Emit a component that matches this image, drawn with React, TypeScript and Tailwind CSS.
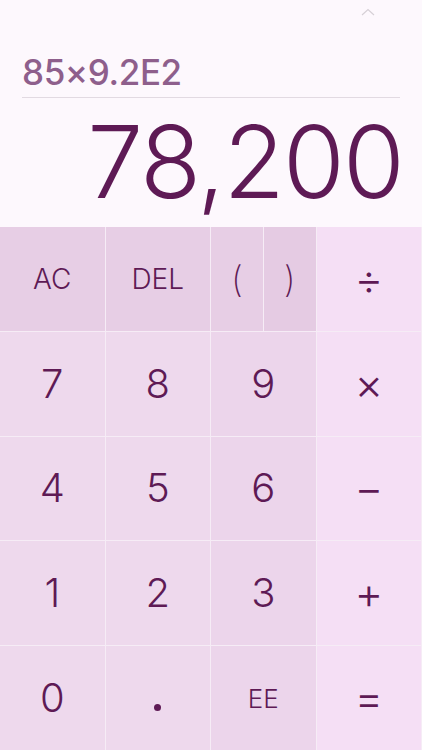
import React from 'react';

type Key = { label: string; tone: 'top' | 'num' | 'num3' | 'op'; size?: string };

const rows: Key[][] = [
  [
    { label: 'AC', tone: 'top', size: 'text-[28px]' },
    { label: 'DEL', tone: 'top', size: 'text-[28px]' },
    { label: '()', tone: 'top' },
    { label: '÷', tone: 'op', size: 'text-[44px]' },
  ],
  [
    { label: '7', tone: 'num' },
    { label: '8', tone: 'num' },
    { label: '9', tone: 'num3' },
    { label: '×', tone: 'op', size: 'text-[44px]' },
  ],
  [
    { label: '4', tone: 'num' },
    { label: '5', tone: 'num' },
    { label: '6', tone: 'num3' },
    { label: '−', tone: 'op', size: 'text-[44px]' },
  ],
  [
    { label: '1', tone: 'num' },
    { label: '2', tone: 'num' },
    { label: '3', tone: 'num3' },
    { label: '+', tone: 'op', size: 'text-[44px]' },
  ],
  [
    { label: '0', tone: 'num' },
    { label: '.', tone: 'num' },
    { label: 'EE', tone: 'num3', size: 'text-[26px]' },
    { label: '=', tone: 'op', size: 'text-[44px]' },
  ],
];

const toneClass = {
  top: 'bg-[#e7cee5]',
  num: 'bg-[#eed9ed]',
  num3: 'bg-[#ecd5eb]',
  op: 'bg-[#f5dff5]',
};

function KeyCell({ k }: { k: Key }) {
  if (k.label === '()') {
    return (
      <div className="flex gap-px bg-[#f6ecf6]">
        <button className="flex flex-1 items-center justify-center bg-[#e7cee5] text-[36px] font-extralight text-[#5e1a55]">(</button>
        <button className="flex flex-1 items-center justify-center bg-[#e5cbe3] text-[36px] font-extralight text-[#5e1a55]">)</button>
      </div>
    );
  }
  return (
    <button
      className={`flex items-center justify-center font-light text-[#5e1a55] ${toneClass[k.tone]} ${k.size ?? 'text-[40px]'}`}
    >
      {k.label === '.' ? <span className="mt-[18px] block h-[7px] w-[7px] rounded-full bg-[#5e1a55]" /> : k.label}
    </button>
  );
}

export default function App() {
  return (
    <div className="flex h-[750px] w-[422px] flex-col bg-[#fdf8fd]" style={{ fontFamily: 'Inter, "Noto Sans", sans-serif' }}>
      <div className="flex h-[227px] flex-col px-[22px]">
        <div className="flex justify-end pt-[8px] pr-[25px]">
          <svg width="14" height="8" viewBox="0 0 14 8" fill="none">
            <path d="M1 7L7 1.5L13 7" stroke="#d6d0d6" strokeWidth="1.2" />
          </svg>
        </div>
        <div className="mt-[37px] text-[35px] font-medium leading-[38px] tracking-[-0.4px] text-[#8e5f8c]">85×9.2E2</div>
        <div className="mt-[6px] h-px bg-[#e2dae2]" />
        <div className="-mr-[3px] mt-[9px] text-right text-[100px] font-light leading-[110px] tracking-[-1.8px] text-[#5e1a55]">78,200</div>
      </div>
      <div className="grid flex-1 grid-cols-4 grid-rows-5 gap-px bg-[#f6ecf6] pr-[1px]">
        {rows.flat().map((k, i) => (
          <KeyCell key={i} k={k} />
        ))}
      </div>
    </div>
  );
}
